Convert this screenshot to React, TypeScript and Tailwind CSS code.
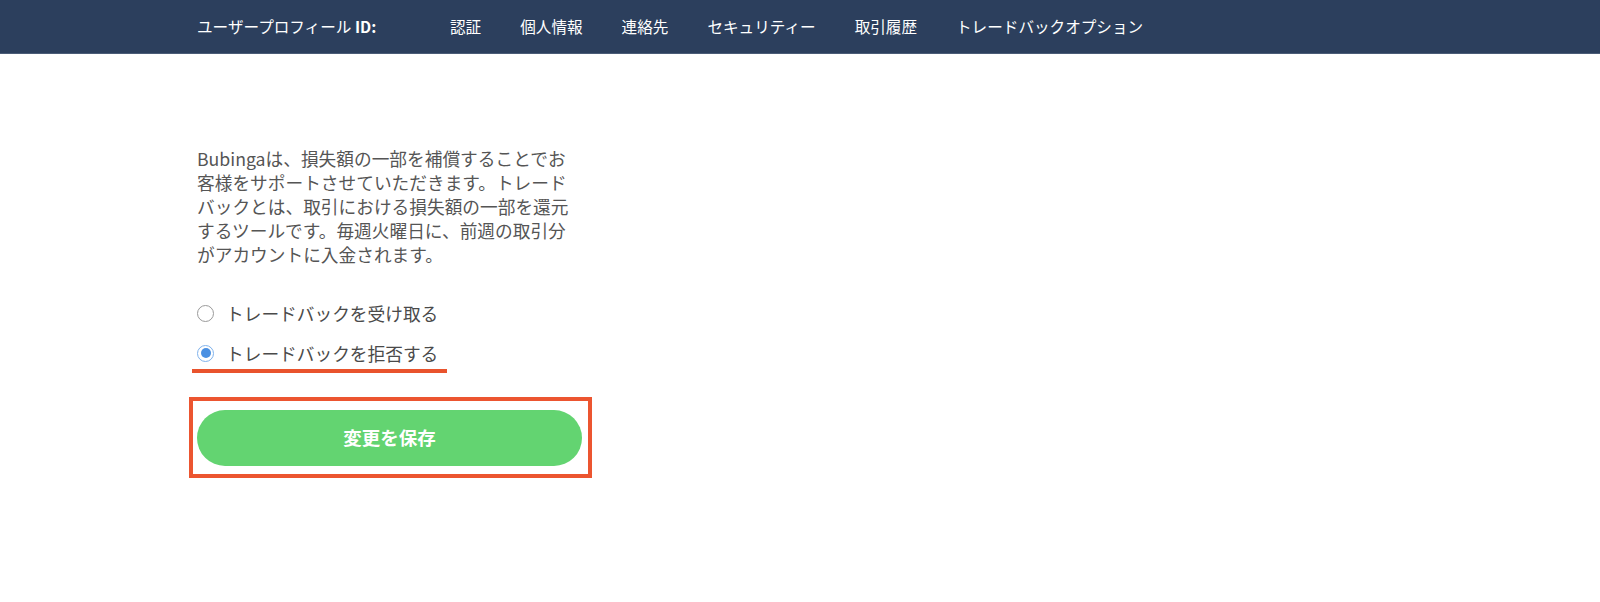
import React from "react";

const font = { fontFamily: '"Noto Sans CJK JP", "Noto Sans", sans-serif' };

function Radio({ checked }: { checked: boolean }) {
  if (checked) {
    return (
      <span className="flex h-[17px] w-[17px] shrink-0 items-center justify-center rounded-full border border-[#7fb2ec] bg-white">
        <span className="h-[10px] w-[10px] rounded-full bg-[#4a90e2]" />
      </span>
    );
  }
  return <span className="h-[17px] w-[17px] shrink-0 rounded-full border border-[#9a9a9a] bg-white" />;
}

export default function App() {
  const nav = ["認証", "個人情報", "連絡先", "セキュリティー", "取引履歴", "トレードバックオプション"];
  return (
    <div className="min-h-[602px] w-full bg-white" style={font}>
      <header className="flex h-[54px] items-center border-b border-[#4b5c77] bg-[#2c3f5d] pl-[197px] text-[15.6px] text-white">
        <div className="w-[253px] shrink-0">
          ユーザープロフィール <span className="font-bold">ID:</span>
        </div>
        <nav className="flex gap-[39px]">
          {nav.map((n) => (
            <span key={n}>{n}</span>
          ))}
        </nav>
      </header>

      <main className="pl-[197px]">
        <p className="mt-[92px] w-[378px] text-[17.7px] leading-[24px] text-[#555555]">
          Bubingaは、損失額の一部を補償することでお客様をサポートさせていただきます。トレードバックとは、取引における損失額の一部を還元するツールです。毎週火曜日に、前週の取引分がアカウントに入金されます。
        </p>

        <div className="mt-[35px] flex h-[24px] items-center gap-[12px] text-[17.7px] text-[#4a4a4a]">
          <Radio checked={false} />
          <span>トレードバックを受け取る</span>
        </div>
        <div className="mt-[16px] flex h-[24px] items-center gap-[12px] text-[17.7px] text-[#4a4a4a]">
          <Radio checked={true} />
          <span>トレードバックを拒否する</span>
        </div>
        <div className="-ml-[5px] mt-[4px] h-[4px] w-[255px] bg-[#e9532d]" />

        <div className="-ml-[8px] mt-[24px] w-[403px] border-4 border-[#ec5530] pb-[8px] pl-[4px] pr-[6px] pt-[9px]">
          <button className="flex h-[56px] w-full items-center justify-center rounded-full bg-[#63d471] text-[18.5px] font-bold text-white">
            変更を保存
          </button>
        </div>
      </main>
    </div>
  );
}
